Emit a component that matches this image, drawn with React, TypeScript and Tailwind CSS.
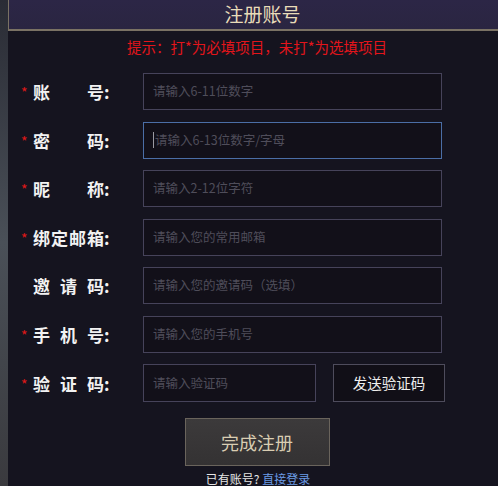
const fields = [
  { star: true, label: "账号", ph: "请输入6-11位数字" },
  { star: true, label: "密码", ph: "请输入6-13位数字/字母", focus: true },
  { star: true, label: "昵称", ph: "请输入2-12位字符" },
  { star: true, label: "绑定邮箱", ph: "请输入您的常用邮箱" },
  { star: false, label: "邀请码", ph: "请输入您的邀请码（选填）" },
  { star: true, label: "手机号", ph: "请输入您的手机号" },
];

const Label = ({ star, text }: { star: boolean; text: string }) => (
  <div className="flex items-center w-[143px] shrink-0">
    <span className="w-[25px] pl-[13px] text-[#e01818] text-[14px] leading-none mt-[1px]">
      {star ? "*" : ""}
    </span>
    <span className="w-[71px] text-justify [text-align-last:justify] text-[17px] font-bold text-[#f2f2f2]">
      {text}
    </span>
    <span className="text-[17px] font-bold text-[#f2f2f2]">:</span>
  </div>
);

export default function App() {
  return (
    <div
      className="w-[498px] h-[486px] overflow-hidden flex bg-[#15141f]"
      style={{ fontFamily: '"Noto Sans CJK SC", "Noto Sans", sans-serif' }}
    >
      <div className="w-[8px] shrink-0 bg-gradient-to-b from-[#2a2c35] via-[#4a5058] to-[#3a3a3e]" />
      <div className="flex-1 flex flex-col">
        <div className="h-[32px] pl-[18px] border-l border-b-2 border-[#7a7264] bg-gradient-to-b from-[#2c2646] to-[#2a2541] flex items-center justify-center text-[19px] text-[#e9dcb8]">
          注册账号
        </div>
        <div className="mt-[5px] text-center text-[14.5px] text-[#e3151b] pl-[8px]">
          提示：打*为必填项目，未打*为选填项目
        </div>
        <div className="mt-[16px] flex flex-col gap-[11.5px]">
          {fields.map((f) => (
            <div key={f.label} className="flex items-center h-[37px]">
              <Label star={f.star} text={f.label} />
              <div
                className={`ml-[-8px] w-[299px] h-[37px] flex items-center pl-[9px] bg-[#121019] border ${
                  f.focus ? "border-[#4b6ea6]" : "border-[#46435a]"
                } text-[12.5px] text-[#4f4d5a]`}
              >
                {f.focus && <span className="w-px h-[16px] bg-[#9a9aa2] mr-px" />}
                {f.ph}
              </div>
            </div>
          ))}
          <div className="flex items-center h-[38px]">
            <Label star text="验证码" />
            <div className="ml-[-8px] w-[173px] h-[38px] flex items-center pl-[9px] bg-[#121019] border border-[#46435a] text-[12.5px] text-[#4f4d5a]">
              请输入验证码
            </div>
            <div className="ml-[17px] w-[112px] h-[38px] flex items-center justify-center bg-[#110f17] border border-[#4e4c5c] text-[14.5px] text-[#eeeeee]">
              发送验证码
            </div>
          </div>
        </div>
        <div className="mt-[16px] flex justify-center pl-[8px]">
          <div className="w-[145px] h-[48px] flex items-center justify-center bg-gradient-to-b from-[#3c3a3b] to-[#343233] border border-[#6a645c] text-[18px] text-[#d9cdb2]">
            完成注册
          </div>
        </div>
        <div className="mt-[4px] text-center text-[12px] text-[#e6e6e6] pl-[10px]">
          已有账号? <span className="text-[#6b9be6]">直接登录</span>
        </div>
      </div>
    </div>
  );
}
